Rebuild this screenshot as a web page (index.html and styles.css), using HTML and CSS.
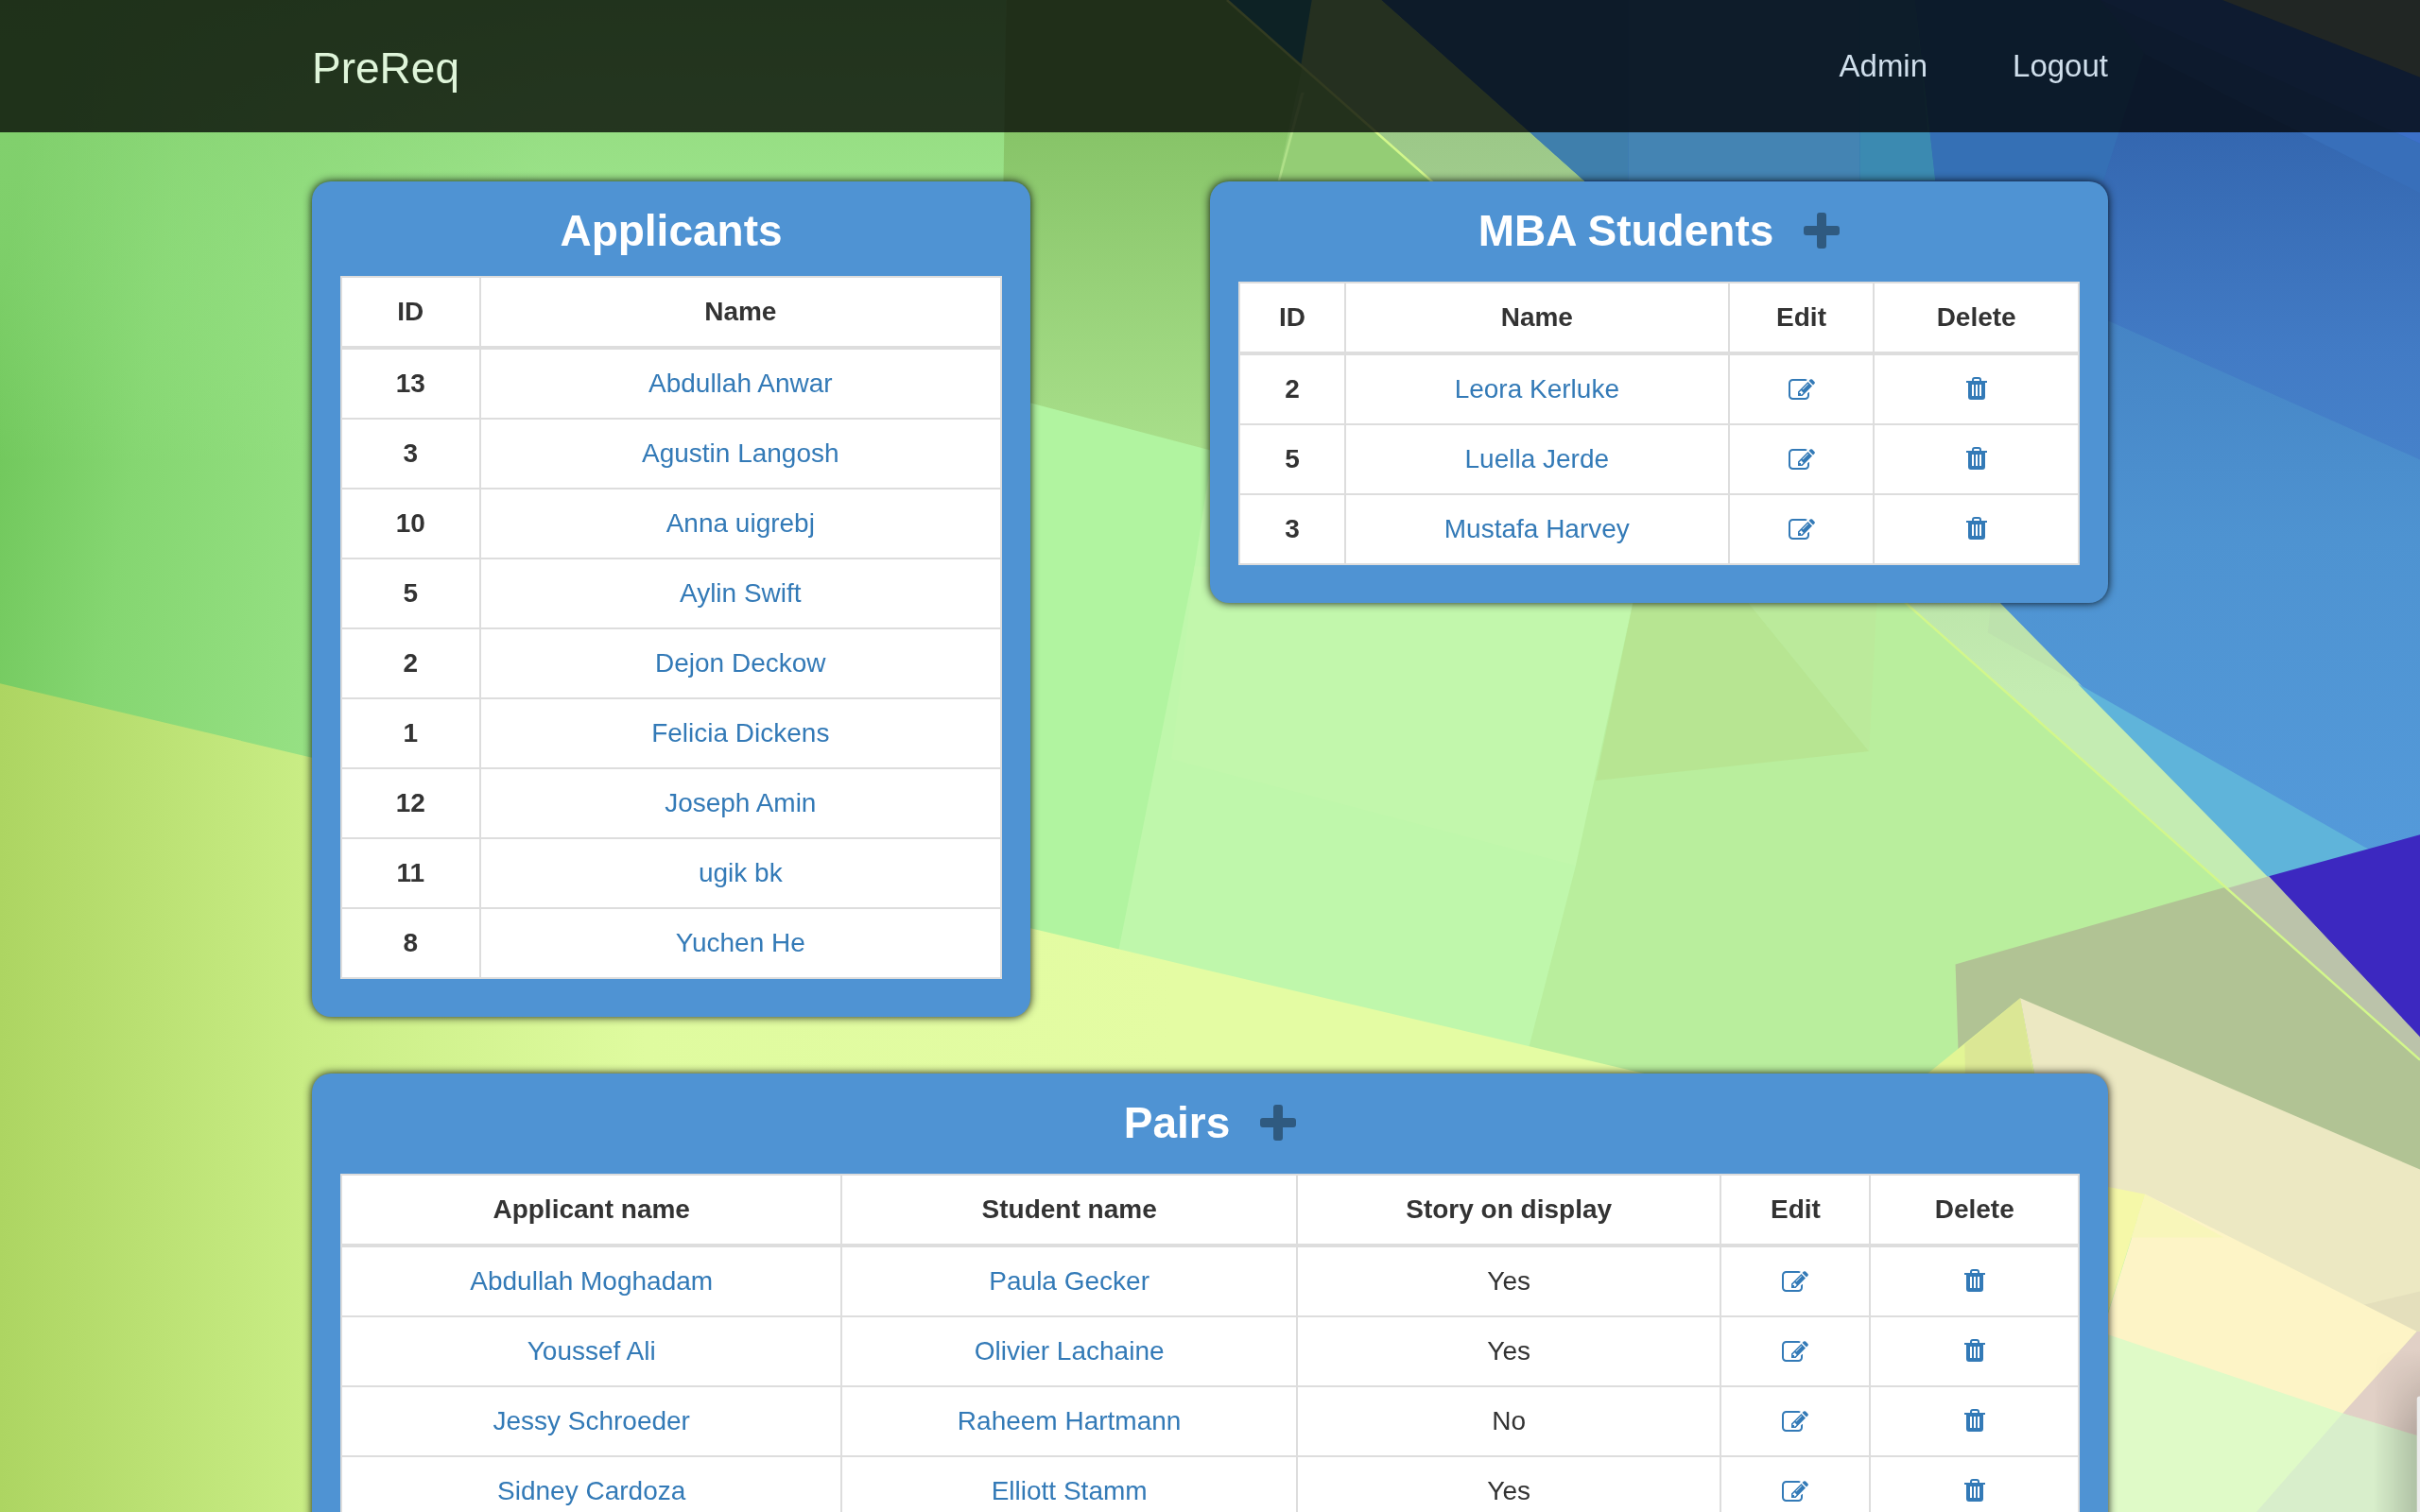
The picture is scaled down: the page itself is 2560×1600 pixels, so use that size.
FILE: index.html
```html
<!DOCTYPE html>
<html lang="en">
<head>
<meta charset="utf-8">
<meta name="viewport" content="width=device-width, initial-scale=1">
<title>PreReq</title>
<link rel="stylesheet" href="styles.css">
</head>
<body>
<svg class="backdrop" viewBox="0 0 1568 980" preserveAspectRatio="xMidYMid slice" aria-hidden="true">
  <defs>
    <linearGradient id="leaf" gradientUnits="userSpaceOnUse" x1="0" y1="200" x2="330" y2="250"><stop offset="0" stop-color="#6fc65a"/><stop offset=".3" stop-color="#85d671"/><stop offset="1" stop-color="#a2e890"/></linearGradient>
    <linearGradient id="leaf-top" x1="0" y1="0" x2="0" y2="1"><stop offset="0" stop-color="#86d072" stop-opacity=".8"/><stop offset="1" stop-color="#a4ea92" stop-opacity="0"/></linearGradient>
    <linearGradient id="moss" gradientUnits="userSpaceOnUse" x1="0" y1="85" x2="0" y2="290"><stop offset="0" stop-color="#87c468"/><stop offset="1" stop-color="#a8df8a"/></linearGradient>
    <linearGradient id="lime" gradientUnits="userSpaceOnUse" x1="0" y1="0" x2="760" y2="0"><stop offset="0" stop-color="#add562"/><stop offset=".26" stop-color="#c9ed85"/><stop offset=".55" stop-color="#dffb9f"/><stop offset="1" stop-color="#e4fca3"/></linearGradient>
    <linearGradient id="sky" gradientUnits="userSpaceOnUse" x1="0" y1="85" x2="0" y2="560"><stop offset="0" stop-color="#3467b0"/><stop offset=".3" stop-color="#427bc5"/><stop offset=".6" stop-color="#4a88cf"/><stop offset="1" stop-color="#559ada"/></linearGradient>
    <linearGradient id="sky-low" gradientUnits="userSpaceOnUse" x1="0" y1="208" x2="0" y2="560"><stop offset="0" stop-color="#4584c5"/><stop offset=".4" stop-color="#4e93d1"/><stop offset="1" stop-color="#549ada"/></linearGradient>
    <linearGradient id="band" gradientUnits="userSpaceOnUse" x1="0" y1="85" x2="0" y2="450"><stop offset="0" stop-color="#9cc888"/><stop offset="1" stop-color="#c4ecb2"/></linearGradient>
    <linearGradient id="edge" x1="0" y1="0" x2="1" y2="0"><stop offset="0" stop-color="#000" stop-opacity="0"/><stop offset="1" stop-color="#000" stop-opacity=".2"/></linearGradient>
    <linearGradient id="edge-fade" x1="0" y1="0" x2="0" y2="1"><stop offset="0" stop-color="#000"/><stop offset=".5" stop-color="#fff"/></linearGradient>
    <mask id="edge-mask"><rect x="1538" y="875" width="30" height="105" fill="url(#edge-fade)"/></mask>
  </defs>
  <rect width="1568" height="980" fill="#b1f4a0"/>
  <path fill="url(#leaf)" d="M0 0H652L648 600H0z"/>
  <path fill="url(#leaf-top)" d="M0 0H652V300H0z"/>
  <path fill="#bff7ab" d="M800 200 774 367 725 615 713 720H1300L1200 200z"/>
  <path fill="#c2f7ac" d="M774 367 759 492 1021 561 1060 380z"/>
  <path fill="#b9ee9d" d="M1058 391 1021 561 980 720H1600V391z"/>
  <path fill="#b7e592" d="M1058 391H1133L1211 487 1034 506z"/>
  <path fill="#bbea9b" d="M1133 391H1216L1211 487z"/>
  <path fill="url(#moss)" d="M652 0H850L1100 300H815L648 256z"/>
  <path fill="#94cd75" d="M853 0 828 117H940L900 0z"/>
  <path fill="#d7fca4" opacity=".4" d="M843 60 828 117H829.500L845 60z"/>
  <path fill="url(#sky)" d="M895 0H1568V600H1480L1296 391 1026 117z"/>
  <path fill="url(#sky-low)" d="M1366 208 1568 298V600H1480L1296 391H1300z"/>
  <path fill="#3f7fac" d="M895 0H1055V117H1026z"/>
  <path fill="#4484b3" d="M1055 0H1205V117H1055z"/>
  <path fill="#3b8ab1" d="M1205 0H1241L1254 117H1205z"/>
  <path fill="#3067ac" d="M895 0H1241L1249 85H990z" opacity=".45"/>
  <path fill="#3570b5" d="M1241 0H1400L1363 117H1254z"/>
  <path fill="#386fba" d="M1390 35 1568 125V93L1361 0z"/>
  <path fill="#3c70c8" d="M1361 0 1568 93V50L1440 0z"/>
  <path fill="#8a9d98" d="M1440 0H1568V50z"/>
  <path fill="#388f9b" d="M795 0H851L843 43z"/>
  <path fill="url(#band)" d="M850 0H895L1026 117 1296 391 1470 568 1568 672V687L1235 391 927 117 843 42z"/>
  <path fill="#bce0ad" opacity=".7" d="M1290 391H1296L1347 443 1288 410z"/>
  <path fill="#5fb4da" d="M1346 443 1532 549 1548 556 1470 569z"/>
  <path fill="#3c28c0" d="M1470 568 1568 541V673z"/>
  <path fill="#b1c394" d="M1267 625 1442 575 1568 687V780L1272 780z"/>
  <path fill="#bbc3aa" d="M1442 576 1470 568 1568 672V687z"/>
  <path fill="none" stroke="#d2f78b" stroke-width="1.500" d="M795 0 927 117 1235 391 1568 687"/>
  <path fill="url(#lime)" d="M0 443 669 602 1062 695 1170 720V980H0z"/>
  <path fill="#e2f595" d="M1250 695 1309 647 1318 695V740H1200z"/>
  <path fill="#dbe795" d="M1273 677 1309 647 1325 740H1274z"/>
  <path fill="#ece8c2" d="M1309 647 1568 758V863L1390 790 1334 780z"/>
  <path fill="#e4dfbc" d="M1468 861 1568 837V864z"/>
  <path fill="#f5f8a8" d="M1360 768 1390 774 1366 850H1360z"/>
  <path fill="#fdf4c6" d="M1390 774 1566 863 1518 918 1360 870z"/>
  <path fill="#f8f6ba" d="M1390 774 1441 802H1381z"/>
  <path fill="#dffac7" d="M1360 863 1518 916 1568 930V980H1360z"/>
  <path fill="#d8eecb" d="M1518 916 1568 931V980H1462z"/>
  <path fill="#e1d0c6" d="M1566 863H1568V931L1518 916z"/>
  <g mask="url(#edge-mask)"><rect x="1538" y="875" width="30" height="105" fill="url(#edge)"/></g>
  <path fill="#ececec" d="M1568 905a2 2 0 0 0-2 2V980H1568z"/>
</svg>

<svg class="symbols" aria-hidden="true">
  <symbol id="icon-edit" viewBox="0 0 1792 1792"><path d="M888 1184l116-116-152-152-116 116v56h96v96h56zm440-720q-16-16-33 1l-350 350q-17 17-1 33t33-1l350-350q17-17 1-33zm80 594v190q0 119-84.500 203.500t-203.500 84.500h-832q-119 0-203.500-84.500t-84.500-203.500v-832q0-119 84.500-203.500t203.500-84.500h832q63 0 117 25 15 7 18 23 3 17-9 29l-49 49q-14 14-32 8-23-6-45-6h-832q-66 0-113 47t-47 113v832q0 66 47 113t113 47h832q66 0 113-47t47-113v-126q0-13 9-22l64-64q15-15 35-7t20 29zm-96-738l288 288-672 672h-288v-288zm444 132l-92 92-288-288 92-92q28-28 68-28t68 28l152 152q28 28 28 68t-28 68z"/></symbol>
  <symbol id="icon-trash" viewBox="0 0 22 24"><path fill-rule="evenodd" d="M6 4V3a3 3 0 0 1 3-3h4a3 3 0 0 1 3 3v1h6v2h-2v15a3 3 0 0 1-3 3H5a3 3 0 0 1-3-3V6H0V4zM8 4h6V3a1 1 0 0 0-1-1H9a1 1 0 0 0-1 1zM6 8v12h2V8zM10 8v12h2V8zM14 8v12h2V8z"/></symbol>
  <symbol id="icon-plus" viewBox="0 0 38 38"><path d="M17 0h4a3 3 0 0 1 3 3v11h11a3 3 0 0 1 3 3v4a3 3 0 0 1-3 3H24v11a3 3 0 0 1-3 3h-4a3 3 0 0 1-3-3V24H3a3 3 0 0 1-3-3v-4a3 3 0 0 1 3-3h11V3a3 3 0 0 1 3-3z"/></symbol>
</svg>

<header class="navbar">
  <nav class="container navbar-inner">
    <a class="brand" href="#">PreReq</a>
    <div class="nav-links"><a href="#">Admin</a><a href="#">Logout</a></div>
  </nav>
</header>

<main class="container board">
  <section class="card applicants">
    <h2 class="card-title">Applicants</h2>
    <table class="table">
      <colgroup><col class="w-id"><col></colgroup>
      <thead><tr><th>ID</th><th>Name</th></tr></thead>
      <tbody>
        <tr><th>13</th><td><a href="#">Abdullah Anwar</a></td></tr>
        <tr><th>3</th><td><a href="#">Agustin Langosh</a></td></tr>
        <tr><th>10</th><td><a href="#">Anna uigrebj</a></td></tr>
        <tr><th>5</th><td><a href="#">Aylin Swift</a></td></tr>
        <tr><th>2</th><td><a href="#">Dejon Deckow</a></td></tr>
        <tr><th>1</th><td><a href="#">Felicia Dickens</a></td></tr>
        <tr><th>12</th><td><a href="#">Joseph Amin</a></td></tr>
        <tr><th>11</th><td><a href="#">ugik bk</a></td></tr>
        <tr><th>8</th><td><a href="#">Yuchen He</a></td></tr>
      </tbody>
    </table>
  </section>

  <section class="card students">
    <h2 class="card-title with-action">MBA Students <a class="add" href="#" aria-label="Add student"><svg><use href="#icon-plus"/></svg></a></h2>
    <table class="table">
      <colgroup><col class="w-student-id"><col><col class="w-student-edit"><col class="w-student-delete"></colgroup>
      <thead><tr><th>ID</th><th>Name</th><th>Edit</th><th>Delete</th></tr></thead>
      <tbody>
        <tr><th>2</th><td><a href="#">Leora Kerluke</a></td><td><a href="#" aria-label="Edit"><svg class="edit"><use href="#icon-edit"/></svg></a></td><td><a href="#" aria-label="Delete"><svg class="trash"><use href="#icon-trash"/></svg></a></td></tr>
        <tr><th>5</th><td><a href="#">Luella Jerde</a></td><td><a href="#" aria-label="Edit"><svg class="edit"><use href="#icon-edit"/></svg></a></td><td><a href="#" aria-label="Delete"><svg class="trash"><use href="#icon-trash"/></svg></a></td></tr>
        <tr><th>3</th><td><a href="#">Mustafa Harvey</a></td><td><a href="#" aria-label="Edit"><svg class="edit"><use href="#icon-edit"/></svg></a></td><td><a href="#" aria-label="Delete"><svg class="trash"><use href="#icon-trash"/></svg></a></td></tr>
      </tbody>
    </table>
  </section>

  <section class="card pairs">
    <h2 class="card-title with-action">Pairs <a class="add" href="#" aria-label="Add pair"><svg><use href="#icon-plus"/></svg></a></h2>
    <table class="table">
      <colgroup><col><col class="w-student"><col class="w-story"><col class="w-edit"><col class="w-delete"></colgroup>
      <thead><tr><th>Applicant name</th><th>Student name</th><th>Story on display</th><th>Edit</th><th>Delete</th></tr></thead>
      <tbody>
        <tr><td><a href="#">Abdullah Moghadam</a></td><td><a href="#">Paula Gecker</a></td><td>Yes</td><td><a href="#" aria-label="Edit"><svg class="edit"><use href="#icon-edit"/></svg></a></td><td><a href="#" aria-label="Delete"><svg class="trash"><use href="#icon-trash"/></svg></a></td></tr>
        <tr><td><a href="#">Youssef Ali</a></td><td><a href="#">Olivier Lachaine</a></td><td>Yes</td><td><a href="#" aria-label="Edit"><svg class="edit"><use href="#icon-edit"/></svg></a></td><td><a href="#" aria-label="Delete"><svg class="trash"><use href="#icon-trash"/></svg></a></td></tr>
        <tr><td><a href="#">Jessy Schroeder</a></td><td><a href="#">Raheem Hartmann</a></td><td>No</td><td><a href="#" aria-label="Edit"><svg class="edit"><use href="#icon-edit"/></svg></a></td><td><a href="#" aria-label="Delete"><svg class="trash"><use href="#icon-trash"/></svg></a></td></tr>
        <tr><td><a href="#">Sidney Cardoza</a></td><td><a href="#">Elliott Stamm</a></td><td>Yes</td><td><a href="#" aria-label="Edit"><svg class="edit"><use href="#icon-edit"/></svg></a></td><td><a href="#" aria-label="Delete"><svg class="trash"><use href="#icon-trash"/></svg></a></td></tr>
      </tbody>
    </table>
  </section>
</main>
</body>
</html>
```
FILE: styles.css
```css
* { box-sizing: border-box; }

html { scrollbar-width: none; }

body {
  margin: 0;
  color: #333;
  background: #b1f4a0;
  font: 28px/40px "Liberation Sans", Arial, sans-serif;
}

a { color: #337ab7; text-decoration: none; }

.backdrop {
  position: fixed;
  inset: 0;
  z-index: -1;
  width: 100%;
  height: 100%;
}

.symbols { display: none; }

.container {
  width: calc(100% - 60px);
  max-width: 1900px;
  margin: 0 auto;
}

.navbar { background: rgba(0, 0, 0, .76); }

.navbar-inner {
  display: flex;
  align-items: center;
  justify-content: space-between;
  min-height: 140px;
}

.navbar .brand {
  padding-top: 4px;
  color: #dff5da;
  font-size: 46px;
  line-height: 52px;
}

.nav-links {
  display: flex;
  gap: 90px;
  font-size: 33px;
}

.nav-links a { color: #cfdeeb; }

.board {
  display: grid;
  grid-template-columns: 8fr 10fr;
  column-gap: 10%;
  row-gap: 60px;
  align-items: start;
  padding: 52px 0 60px;
}

.pairs { grid-column: 1 / -1; }

.card {
  padding: 26px 30px 40px;
  border-radius: 20px;
  background: #4f93d3;
  box-shadow: 0 0 10px rgba(0, 0, 0, .9);
}

.card-title {
  display: flex;
  align-items: center;
  justify-content: center;
  gap: 32px;
  margin: 0 0 22px;
  color: #fff;
  font-size: 46px;
  line-height: 52px;
}

.with-action { margin-bottom: 28px; }

.add { display: flex; }
.add svg { width: 38px; height: 38px; fill: #2f5a80; }

.table {
  width: 100%;
  table-layout: fixed;
  border-collapse: collapse;
  background: #fff;
  text-align: center;
}

.table th,
.table td {
  padding: 16px;
  border: 2px solid #ddd;
}

.table thead th { border-bottom-width: 4px; }

.w-id { width: 21%; }
.w-student-id { width: 12.6%; }
.w-student-edit { width: 17.3%; }
.w-student-delete { width: 24.4%; }
.w-student { width: 26.2%; }
.w-story { width: 24.4%; }
.w-edit { width: 8.6%; }
.w-delete { width: 12%; }

.edit,
.trash { fill: currentColor; }
.edit { width: 28px; height: 28px; vertical-align: -6px; }
.trash { width: 22px; height: 24px; vertical-align: -2px; }
```
